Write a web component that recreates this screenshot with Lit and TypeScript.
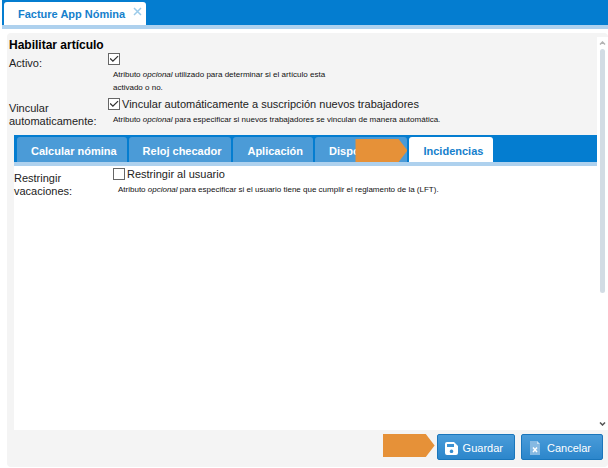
import { LitElement, html, css, svg } from "lit";
import { customElement, property, state } from "lit/decorators.js";
import { classMap } from "lit/directives/class-map.js";

const saveIcon = svg`
  <path fill="#fff" fill-rule="evenodd" d="M2 0h7l4 4v7a2 2 0 0 1-2 2H2a2 2 0 0 1-2-2V2a2 2 0 0 1 2-2zM2 2v3h7V2zM6.500 7.500a1.800 1.800 0 1 0 .01 0z"/>`;
const cancelIcon = svg`
  <path fill="#86b9e2" d="M1 0h7l3 3v11H1z"/>
  <path fill="#c4def2" d="M8 0l3 3H8z"/>
  <path stroke="#fff" stroke-width="1.500" d="M4 6.500l4 4.500M8 6.500L4 11"/>`;

@customElement("field-row")
class FieldRow extends LitElement {
  @property() label = "";
  @property() text = "";
  @property() after = "";
  @property({ type: Boolean }) checked = false;
  @property({ type: Boolean }) narrow = false;

  static styles = css`
    :host { display: grid; grid-template-columns: 99px 1fr; color: #222; font-size: 11px; line-height: 13px; }
    .label { padding-top: 5px; max-width: 92px; }
    .check { display: flex; align-items: flex-start; gap: 2px; height: 14px; padding-top: 1px; }
    .box {
      appearance: none; box-sizing: border-box; flex: none; width: 12px; height: 12px; margin: 0;
      border: 1px solid #666; background: #fff; display: grid; place-items: center;
    }
    .box:checked::before {
      content: ""; width: 9px; height: 8px; background: #333;
      clip-path: polygon(0 48%, 12% 36%, 38% 66%, 90% 8%, 100% 18%, 38% 88%);
    }
    .note { margin: 1px 0 0 5px; font-size: 8px; color: #111; }
    .narrow { max-width: 236px; }
  `;

  render() {
    return html`
      <label class="label" for="box">${this.label}</label>
      <div>
        <div class="check">
          <input class="box" id="box" type="checkbox" .checked=${this.checked} />
          <label for="box">${this.text}</label>
        </div>
        <p class=${classMap({ note: true, narrow: this.narrow })}>Atributo <em>opcional</em> ${this.after}</p>
      </div>`;
  }
}

@customElement("app-root")
class AppRoot extends LitElement {
  @state() private active = 4;
  private tabs = ["Calcular nómina", "Reloj checador", "Aplicación", "Dispositivos", "Incidencias"];

  static styles = css`
    :host { display: block; font-family: "Liberation Sans", Arial, sans-serif; background: #fff; }
    .page { box-sizing: border-box; min-height: 100vh; display: flex; flex-direction: column; padding: 0 0 1px 2px; }
    .topbar { display: flex; padding: 2px 2px 0; background: #047dd0; border-bottom: 4px solid #aed1ee; }
    .doc {
      display: flex; align-items: center; height: 23px; padding: 0 4px 0 14px; gap: 8px;
      background: #fff; border-radius: 3px 3px 0 0; color: #1580cc; font-size: 11px; font-weight: bold;
    }
    .close { display: flex; padding: 0 0 4px; border: 0; background: none; }
    .panel { flex: 1; display: flex; flex-direction: column; margin: 4px 0 0 5px; background: #f4f4f4; border-radius: 4px; }
    .scroll { flex: 1; display: flex; padding-top: 4px; }
    .content { flex: 1; min-width: 0; display: flex; flex-direction: column; }
    .fields { display: flex; flex-direction: column; gap: 3px; padding: 1px 2px 7px; }
    h1 { margin: 0 0 -3px; font-size: 12px; line-height: 14px; color: #000; }
    .card { flex: 1; margin-left: 7px; background: #fff; }
    .tabs { display: flex; gap: 2px; padding: 2px 3px 0; background: #047dd0; border-bottom: 4px solid #aed1ee; }
    .tab {
      position: relative; height: 25px; padding: 2px 10px 0 14px; border: 0; border-radius: 3px 3px 0 0;
      background: #4b9bd7; color: #fff; font: bold 11px "Liberation Sans", Arial, sans-serif; white-space: nowrap;
    }
    .tab.on { background: #fff; color: #1580cc; }
    .tab.marked { padding-right: 13px; }
    .arrow { display: block; width: 52px; height: 23px; background: #e69138; clip-path: polygon(0 0, 83% 0, 100% 50%, 83% 100%, 0 100%); }
    .over { position: absolute; right: 0; top: 2px; }
    .pane { padding-top: 1px; }
    .bar { flex: none; width: 11px; display: flex; flex-direction: column; align-items: center; background: #fff; padding: 4px 0; }
    .track { flex: 1; width: 5px; margin: 4px 0; }
    .thumb { height: 66%; background: #d2dce4; border-radius: 3px; }
    footer { display: flex; justify-content: flex-end; align-items: flex-start; padding: 4px 5px 7px; }
    .btn {
      box-sizing: border-box; height: 26px; display: flex; align-items: center; gap: 5px; padding: 2px 11px 0 7px; white-space: nowrap;
      border: 1px solid #1a76bb; border-radius: 2px; background: linear-gradient(#4a9cd9, #2c86cb);
      color: #fff; font: 11px "Liberation Sans", Arial, sans-serif;
    }
    .save { margin: 0 6px 0 2px; }
  `;

  render() {
    return html`
      <div class="page">
        <header class="topbar">
          <div class="doc">
            Facture App Nómina
            <button class="close" aria-label="Cerrar">
              <svg width="9" height="9" viewBox="0 0 9 9"><path d="M1 1l7 7M8 1L1 8" stroke="#9ccbea" stroke-width="1.500"/></svg>
            </button>
          </div>
        </header>
        <main class="panel">
          <div class="scroll">
            <div class="content">
              <div class="fields">
                <h1>Habilitar artículo</h1>
                <field-row label="Activo:" checked narrow
                  after="utilizado para determinar si el artículo esta activado o no."></field-row>
                <field-row label="Vincular automaticamente:" checked
                  text="Vincular automáticamente a suscripción nuevos trabajadores"
                  after="para especificar si nuevos trabajadores se vinculan de manera automática."></field-row>
              </div>
              <section class="card">
                <div class="tabs" role="tablist">
                  ${this.tabs.map((name, i) => html`
                    <button role="tab" aria-selected=${i === this.active}
                      class=${classMap({ tab: true, on: i === this.active, marked: i === 3 })}
                      @click=${() => { this.active = i; }}>
                      ${name}${i === 3 ? html`<span class="arrow over"></span>` : ""}
                    </button>`)}
                </div>
                <div class="pane">
                  <field-row label="Restringir vacaciones:" text="Restringir al usuario"
                    after="para especificar si el usuario tiene que cumplir el reglamento de la (LFT)."></field-row>
                </div>
              </section>
            </div>
            <div class="bar">
              <svg width="7" height="4" viewBox="0 0 7 4"><path d="M1 3.500l2.500-2.500L6 3.500" fill="none" stroke="#b4b4b4" stroke-width="1.500"/></svg>
              <div class="track"><div class="thumb"></div></div>
              <svg width="7" height="4" viewBox="0 0 7 4"><path d="M1 .5l2.500 2.500L6 .5" fill="none" stroke="#555" stroke-width="1.500"/></svg>
            </div>
          </div>
          <footer>
            <span class="arrow"></span>
            <button class="btn save"><svg width="13" height="13" viewBox="0 0 13 13">${saveIcon}</svg>Guardar</button>
            <button class="btn"><svg width="13" height="14" viewBox="0 0 13 14">${cancelIcon}</svg>Cancelar</button>
          </footer>
        </main>
      </div>`;
  }
}
